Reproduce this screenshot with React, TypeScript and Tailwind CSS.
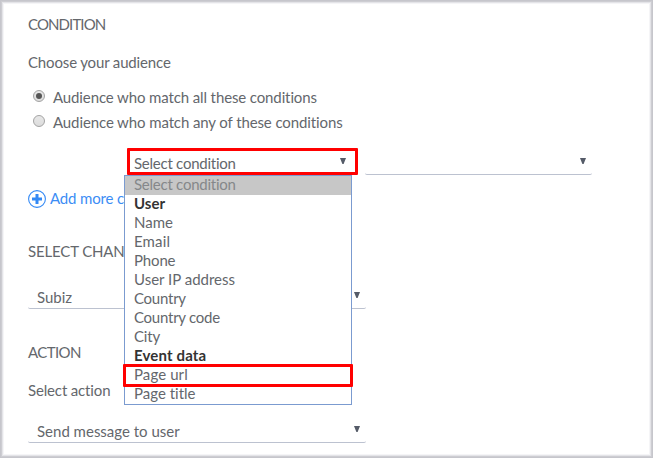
import React from "react";

const options = [
  { label: "User", group: true, ls: "tracking-[0px]" },
  { label: "Name", ls: "tracking-[0px]" },
  { label: "Email", ls: "tracking-[0.15px]" },
  { label: "Phone", ls: "tracking-[-0.15px]" },
  { label: "User IP address", ls: "tracking-[0px]" },
  { label: "Country", ls: "tracking-[-0.25px]" },
  { label: "Country code", ls: "tracking-[-0.25px]" },
  { label: "City", ls: "tracking-[-0.2px]" },
  { label: "Event data", group: true, ls: "tracking-[0.15px]" },
  { label: "Page url", marked: true, ls: "tracking-[0.1px]" },
  { label: "Page title", ls: "tracking-[0px]" },
];

function Arrow() {
  return (
    <svg width="6" height="6" viewBox="0 0 6 6" className="block shrink-0">
      <path d="M0 0H6L3.6 6H2.4Z" fill="#555b68" />
    </svg>
  );
}

function Select({ label, className = "" }: { label: string; className?: string }) {
  return (
    <div className={`flex h-[21px] justify-between rounded-[2px] border-b border-[#bcc2d0] pr-[6px] pl-[9px] ${className}`}>
      <span className="-mt-px">{label}</span>
      <span className="pt-[4px]"><Arrow /></span>
    </div>
  );
}

function Radio({ checked = false }: { checked?: boolean }) {
  return (
    <span className="mb-[2px] flex size-[12px] items-center justify-center rounded-full border border-[#a3a3a3] bg-linear-to-b from-[#e8e8e8] to-[#dcdcdc]">
      {checked && <span className="size-[6px] rounded-full bg-[#555]" />}
    </span>
  );
}

export default function App() {
  return (
    <div className="relative h-[458px] w-[653px] overflow-hidden bg-white pt-[14px] pl-[28px] font-['Lato','Open_Sans',sans-serif] text-[15px] leading-[20px] text-[#64676c] [font-variant-ligatures:none]">
      <h2 className="tracking-[-0.9px]">CONDITION</h2>
      <p className="mt-[18px] tracking-[-0.15px]">Choose your audience</p>
      <div className="mt-[15px] flex h-[20px] items-center gap-[8px] pl-[5px] tracking-[-0.12px]">
        <Radio checked />
        <span>Audience who match all these conditions</span>
      </div>
      <div className="mt-[5px] flex h-[20px] items-center gap-[8px] pl-[5px] tracking-[-0.11px]">
        <Radio />
        <span>Audience who match any of these conditions</span>
      </div>
      <div className="mt-[16px] flex h-[27px] items-start gap-[7px] pl-[99px]">
        <div className="relative z-20 flex h-[27px] w-[231px] justify-between rounded-[1px] border-[3px] border-[#f00] bg-white pt-[3px] pr-[9px] pl-[4px]">
          <span className="-mt-px tracking-[-0.25px]">Select condition</span>
          <span className="pt-[4px]"><Arrow /></span>
          <div className="absolute top-[24px] -left-[6px] -z-10 w-[228px] border border-[#7b9bd0] bg-white leading-[17px]">
            <div className="h-[19px] bg-[#c7c7c7] pl-[9px] tracking-[-0.25px] text-[#85878a]">Select condition</div>
            {options.map((o) => (
              <div
                key={o.label}
                className={`relative h-[19px] pl-[9px] ${o.group ? "font-bold text-[#333]" : ""} ${o.ls}`}
              >
                {o.label}
                {o.marked && (
                  <span className="absolute -top-[2px] -left-[2px] h-[23px] w-[230px] rounded-[1px] border-[3px] border-[#f00]" />
                )}
              </div>
            ))}
          </div>
        </div>
        <div className="flex h-[27px] w-[227px] justify-end rounded-[2px] border-b border-[#bcc2d0] pt-[10px] pr-[6px]">
          <Arrow />
        </div>
      </div>
      <div className="mt-[14px] flex h-[20px] items-center gap-[4px] text-[#3c8df5]">
        <svg width="18" height="18" viewBox="0 0 18 18" fill="none" stroke="#3389f5" className="shrink-0">
          <circle cx="9" cy="9" r="8.4" strokeWidth="1.1" />
          <path d="M9 4V14M4 9H14" strokeWidth="3" />
        </svg>
        <span className="-mt-[2px] tracking-[-0.15px]">Add more condition</span>
      </div>
      <h2 className="mt-[32px] tracking-[-0.15px]">SELECT CHANNEL</h2>
      <Select label="Subiz" className="mt-[27px] w-[338px]" />
      <h2 className="mt-[33px] tracking-[-0.6px]">ACTION</h2>
      <p className="mt-[18px] tracking-[-0.15px]">Select action</p>
      <Select label="Send message to user" className="mt-[22px] w-[338px]" />
      <div className="pointer-events-none absolute inset-0 shadow-[inset_0_0_0_1px_#c6c6cc,inset_0_0_0_2px_#cdcdd2,inset_0_0_0_3px_#e4e4e8,inset_0_0_0_4px_#f5f5f7]" />
    </div>
  );
}
